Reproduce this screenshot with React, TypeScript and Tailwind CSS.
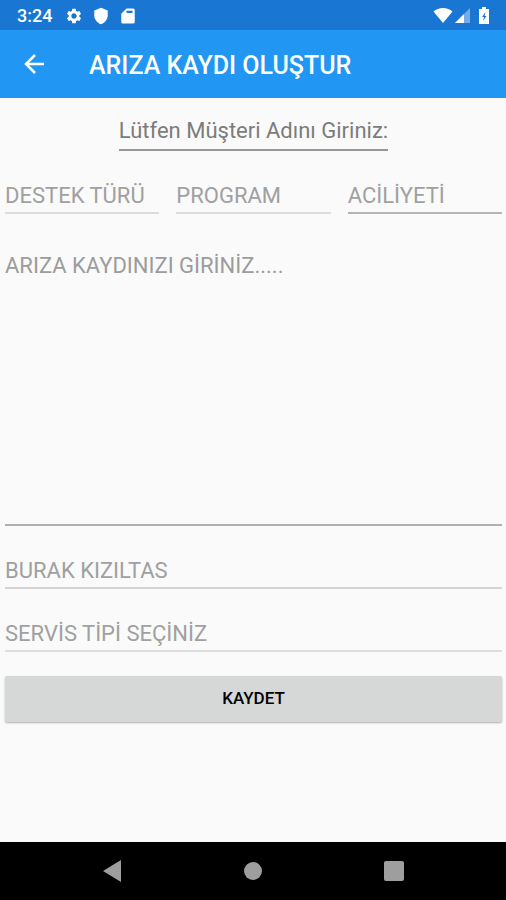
import type { InputHTMLAttributes } from "react";
import clsx from "clsx";
import { MdSettings } from "react-icons/md";

function StatusBar() {
  return (
    <div className="flex h-[30px] shrink-0 items-center bg-[#1976d2] pt-px pl-[17px] pr-4 text-white">
      <span className="w-12 text-lg leading-[30px] font-medium">3:24</span>
      <MdSettings className="size-[18px]" />
      <svg viewBox="0 0 24 24" className="ml-[9px] size-[18px]" fill="currentColor" aria-hidden="true">
        <path d="M12 1 3 4.500V11c0 5.550 3.840 10.240 9 12 5.160-1.760 9-6.450 9-12V4.500z" />
      </svg>
      <svg viewBox="0 0 24 24" className="ml-[9px] size-[18px]" fill="currentColor" aria-hidden="true">
        <path
          fillRule="evenodd"
          d="M10 2h9a2 2 0 0 1 2 2v16a2 2 0 0 1-2 2H5a2 2 0 0 1-2-2V9zM10 5v3h8V5z"
        />
      </svg>
      <svg viewBox="0 0 20 16" className="ml-auto h-4 w-5" fill="currentColor" aria-hidden="true">
        <path d="M.5 3.500C3 1.300 6.300 0 10 0s7 1.300 9.500 3.500L10 15z" />
      </svg>
      <svg viewBox="0 0 16 16" className="ml-0.5 size-4" fill="currentColor" aria-hidden="true">
        <path d="M15 0v15H0z" opacity="0.4" />
        <path d="M9 6v9H0z" />
      </svg>
      <svg viewBox="0 0 12 18" className="ml-[7px] h-[18px] w-3" aria-hidden="true">
        <path d="M4 0h4v2h3v15H1V2h3z" fill="currentColor" />
        <path d="M7.500 5 4 10H6l-1 4L8.500 9H6.500z" fill="#1976d2" />
      </svg>
    </div>
  );
}

function AppBar() {
  return (
    <header className="flex h-[68px] shrink-0 items-center bg-[#2196f3] pl-5 text-white">
      <button type="button" aria-label="Geri" className="p-0.5">
        <svg viewBox="0 0 24 24" className="size-6" fill="none" stroke="currentColor" strokeWidth="2.500" aria-hidden="true">
          <path d="M22 12H4M13 3l-9 9 9 9" />
        </svg>
      </button>
      <h1 className="ml-[41px] pt-1 text-[25px] leading-8 font-medium">ARIZA KAYDI OLUŞTUR</h1>
    </header>
  );
}

function Field({ label, className, ...rest }: InputHTMLAttributes<HTMLInputElement> & { label: string }) {
  return (
    <input
      type="text"
      aria-label={label}
      placeholder={label}
      className={clsx("h-[38px] min-w-0 rounded-none border-b-2 bg-transparent text-[22px] outline-none", className)}
      {...rest}
    />
  );
}

function NavigationBar() {
  return (
    <nav className="flex h-[58px] shrink-0 items-center justify-between bg-black px-[102px] text-[#9e9e9e]">
      <button type="button" aria-label="Geri">
        <svg viewBox="0 0 20 22" className="h-[22px] w-5" fill="currentColor" aria-hidden="true">
          <path d="M19 0v22L1 11z" />
        </svg>
      </button>
      <button type="button" aria-label="Ana ekran" className="size-[18px] rounded-full bg-current" />
      <button type="button" aria-label="Son uygulamalar" className="size-5 rounded-xs bg-current" />
    </nav>
  );
}

export default function App() {
  return (
    <div className="flex min-h-screen flex-col bg-[#fafafa] font-[Roboto,sans-serif]">
      <StatusBar />
      <AppBar />
      <form className="flex grow flex-col pt-[15px] pr-1 pl-[5px]">
        <Field
          label="Lütfen Müşteri Adını Giriniz:"
          className="field-sizing-content self-center border-[#979797] pb-0.5 placeholder:text-[#7c7c7c]"
        />
        <div className="mt-[25px] grid grid-cols-3 gap-[17px]">
          <Field label="DESTEK TÜRÜ" className="border-[#dcdcdc] pt-0.5 placeholder:text-[#a0a0a0]" />
          <Field label="PROGRAM" className="border-[#dcdcdc] pt-0.5 placeholder:text-[#a0a0a0]" />
          <Field label="ACİLİYETİ" className="border-[#b5b5b5] pt-0.5 placeholder:text-[#a0a0a0]" />
        </div>
        <textarea
          aria-label="Arıza kaydı"
          placeholder="ARIZA KAYDINIZI GİRİNİZ....."
          className="mt-8 h-[280px] resize-none border-b-2 border-[#b0b0b0] bg-transparent pt-1.5 text-[22px] leading-7 outline-none placeholder:text-[#9c9c9c]"
        />
        <Field label="BURAK KIZILTAS" className="mt-[25px] border-[#d4d4d4] pt-0.5 placeholder:text-[#a0a0a0]" />
        <Field label="SERVİS TİPİ SEÇİNİZ" className="mt-[25px] border-[#dedede] pt-0.5 placeholder:text-[#a0a0a0]" />
        <button
          type="button"
          className="mt-6 h-[46px] rounded-xs bg-[#d6d7d7] text-[17px] font-medium text-black shadow-[0_1px_2px_rgba(0,0,0,0.3)]"
        >
          KAYDET
        </button>
      </form>
      <NavigationBar />
    </div>
  );
}
